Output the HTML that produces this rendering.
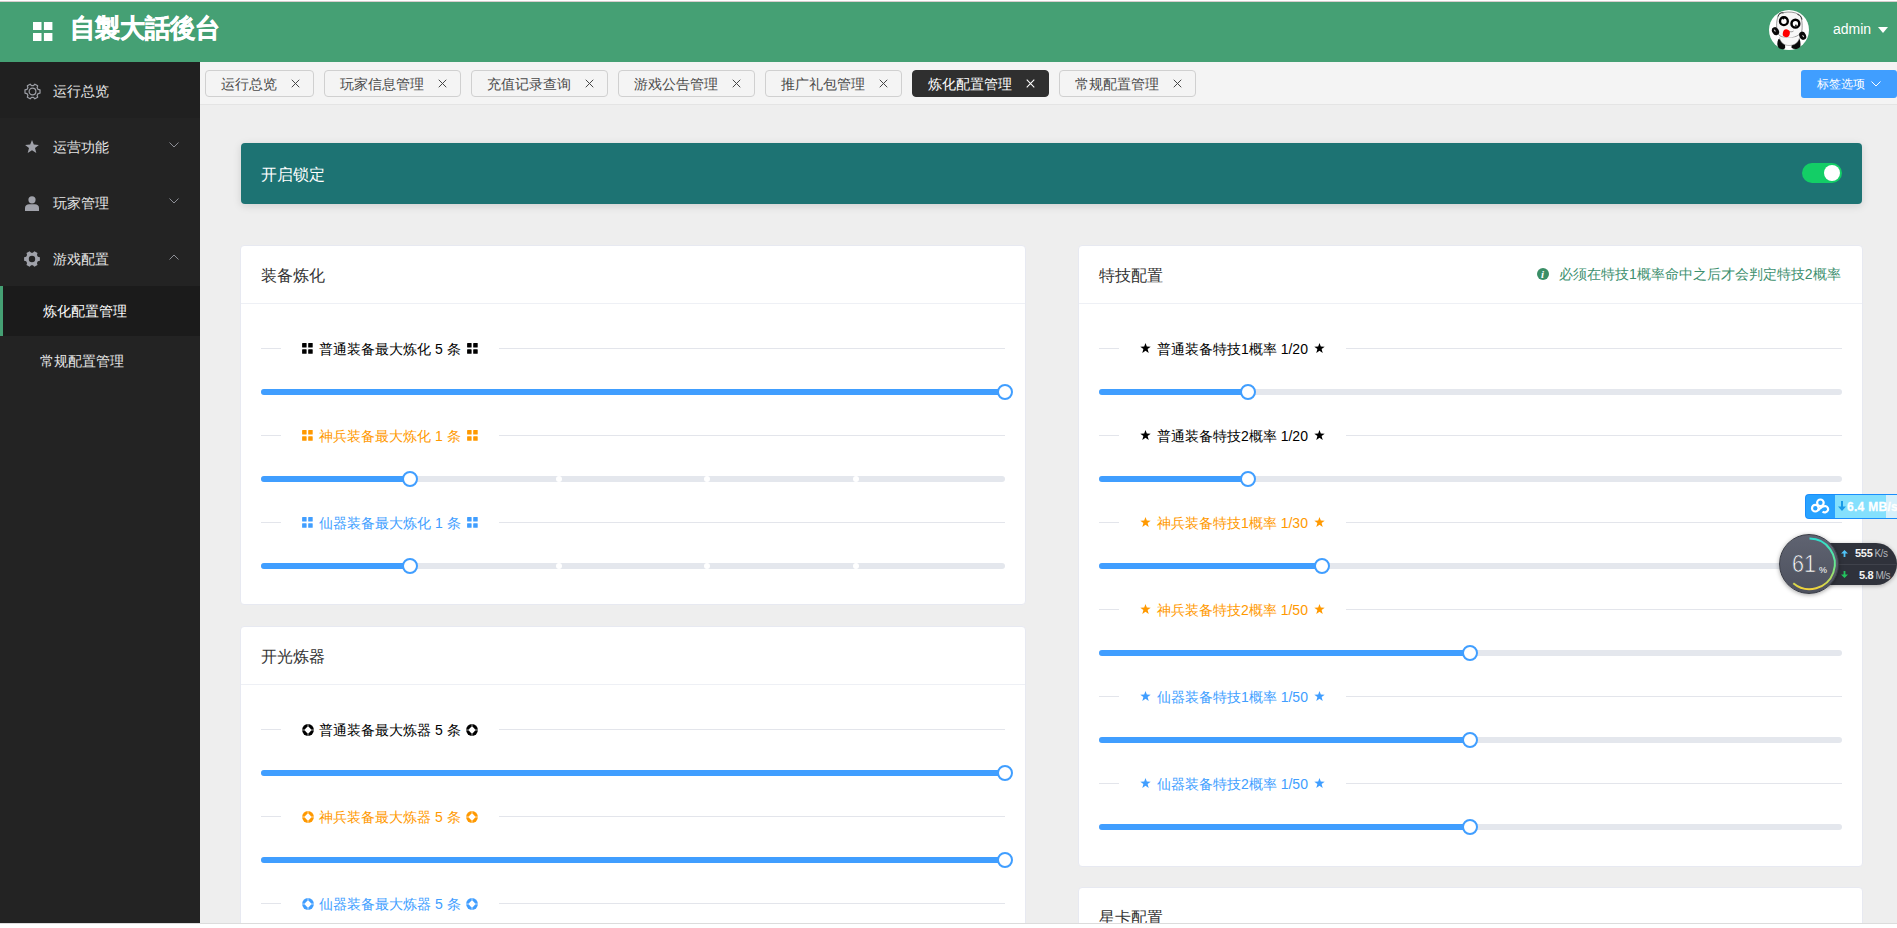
<!DOCTYPE html>
<html><head><meta charset="utf-8">
<style>
*{box-sizing:border-box;margin:0;padding:0}
html,body{width:1897px;height:928px;overflow:hidden;background:#fff;font-family:"Liberation Sans",sans-serif;}
.abs{position:absolute}
#topstrip{left:0;top:0;width:1897px;height:2px;background:#fff;border-bottom:1px solid #d8cdcd}
#header{left:0;top:2px;width:1897px;height:60px;background:#45a074}
#side{left:0;top:62px;width:200px;height:861px;background:#232323}
#tabbar{left:200px;top:62px;width:1697px;height:43px;background:#f4f4f4;border-bottom:1px solid #e4e4e4}
#content{left:200px;top:105px;width:1697px;height:818px;background:#eeeeee;overflow:hidden}
#bottom{left:0;top:923px;width:1897px;height:5px;background:#fff;border-top:1px solid #dcdcdc}
.txt{white-space:nowrap;line-height:1}
.mi{position:absolute;left:0;width:200px;height:56px}
.mi .t{position:absolute;left:53px;top:1px;line-height:56px;font-size:14px;color:#e6e6e6;white-space:nowrap}
.mi svg{position:absolute}
.tab{position:absolute;top:70px;height:27px;border:1px solid #d0d0d0;border-radius:4px;background:#f4f4f4;font-size:14px;color:#4a4a4a;line-height:27px;padding-left:15px;white-space:nowrap}
.tab .x{position:absolute;top:8px;width:9px;height:9px}
.tab.on{background:#2f2f2f;border-color:#2f2f2f;color:#fff}
.card{background:#fff;border-radius:4px;border:1px solid #e7e9f1}
.ch{position:absolute;left:0;top:0;width:100%;height:58px;border-bottom:1px solid #eef0f5;font-size:16px;color:#333;padding-left:20px;line-height:60px;white-space:nowrap}
.leg{height:18px;background:#fff;padding:0 21px;white-space:nowrap;font-size:14px;line-height:18px;display:flex;align-items:center}
.leg .lt{margin:0 6px;position:relative;top:1px}
.trk{height:6px;border-radius:3px;background:#e4e7ed}
.bar{height:6px;border-radius:3px;background:#409eff}
.stp{width:6px;height:6px;border-radius:50%;background:#fff}
.hdl{width:16px;height:16px;border-radius:50%;background:#fff;border:2px solid #409eff}
</style></head><body>
<div id="topstrip" class="abs"></div>
<div id="header" class="abs">
  <svg class="abs" style="left:32px;top:19px" width="22" height="22" viewBox="0 0 22 22"><rect x="1" y="1" width="8.5" height="8" fill="#fff"/><rect x="11.9" y="1" width="8.5" height="8" fill="#fff"/><rect x="1" y="12" width="8.5" height="8" fill="#fff"/><rect x="11.9" y="12" width="8.5" height="8" fill="#fff"/></svg>
  <div class="abs txt" style="left:70px;top:13px;font-size:25px;font-weight:bold;color:#fff;-webkit-text-stroke:.5px #fff;transform:scaleY(1.03);transform-origin:0 0">自製大話後台</div>
  <svg class="abs" style="left:1769px;top:8px" width="40" height="40" viewBox="0 0 40 40">
<circle cx="20" cy="20" r="20" fill="#fff"/>
<path d="M8.5 23C7 17 7.5 9 9.5 5.5 11 3 13 2 15 2.5 20 1.5 26 2 30 4.5 33 7 33.5 14 33 20 32 24 28 27.5 20 28 14 28 10 26 8.5 23z" fill="#f7f7f7" stroke="#555" stroke-width=".6"/>
<path d="M9 6.5C9.5 3.5 12 2.2 14.5 3M28.5 4.5C31 5 32.5 6.5 33 9.5" fill="none" stroke="#333" stroke-width="1"/>
<path d="M9.5 29C8 32 7.5 36 10.5 38.5 13 39.8 16 39.5 16.2 37.5L15.8 30.5zM22.8 30.5L22.5 37.8C25 39.7 29 39.3 31.2 37 31.8 34 31.5 31 30.5 28.8z" fill="#0a0a0a"/>
<path d="M10.5 27.5C11.5 33 15.5 35.5 20 35.5 25 35.5 29.5 33 30.5 27.5" fill="#f8f8f8" stroke="#777" stroke-width=".5"/>
<ellipse cx="6.5" cy="21.2" rx="3.3" ry="4.2" transform="rotate(-30 6.5 21.2)" fill="#0a0a0a"/>
<ellipse cx="33.7" cy="25.8" rx="3.3" ry="4.2" transform="rotate(-25 33.7 25.8)" fill="#0a0a0a"/>
<ellipse cx="5.8" cy="20.6" rx=".6" ry="1.3" transform="rotate(-40 5.8 20.6)" fill="#ccc"/>
<ellipse cx="34.2" cy="26.2" rx=".6" ry="1.3" transform="rotate(-40 34.2 26.2)" fill="#ccc"/>
<circle cx="14.9" cy="11.2" r="3.9" fill="#fff" stroke="#000" stroke-width="2.4"/>
<circle cx="26.4" cy="13.7" r="3.9" fill="#fff" stroke="#000" stroke-width="2.5"/>
<circle cx="14.4" cy="8.6" r=".9" fill="#000"/>
<circle cx="26.9" cy="15.6" r="1" fill="#333"/>
<ellipse cx="17.3" cy="23.3" rx="3.5" ry="3.9" fill="#f00" transform="rotate(15 17.3 23.3)"/>
<path d="M20.5 21.5C22 22 23.5 21.8 24.5 21" fill="none" stroke="#555" stroke-width=".6"/>
</svg>
  <div class="abs txt" style="left:1833px;top:20px;font-size:14px;color:#fff">admin</div>
  <svg class="abs" style="left:1878px;top:25px" width="10" height="6" viewBox="0 0 10 6"><path d="M0 0H10L5 6Z" fill="#fff"/></svg>
</div>
<div id="side" class="abs">
  <div class="mi" style="top:0;background:#202020">
    <svg style="left:24px;top:21px" width="17" height="17" viewBox="-.3 -.3 16.6 16.6"><path d="M13.41 5.92 L15.34 6.44 L15.34 9.56 L13.41 10.08 L12.51 11.65 L13.02 13.57 L10.32 15.13 L8.91 13.73 L7.09 13.73 L5.68 15.13 L2.98 13.57 L3.49 11.65 L2.59 10.08 L0.66 9.56 L0.66 6.44 L2.59 5.92 L3.49 4.35 L2.98 2.43 L5.68 0.87 L7.09 2.27 L8.91 2.27 L10.32 0.87 L13.02 2.43 L12.51 4.35Z" fill="none" stroke="#9c9ea5" stroke-width="1.2" stroke-linejoin="round"/><circle cx="8" cy="8" r="3.3" fill="none" stroke="#9c9ea5" stroke-width="1.2"/></svg>
    <div class="t">运行总览</div>
  </div>
  <div class="mi" style="top:56px">
    <svg style="left:25px;top:22px" width="14" height="13" viewBox="0 0 14 13"><path d="M7 0l1.8 4.6 5.1.3-3.9 3.2 1.3 4.9L7 10.3 2.7 13l1.3-4.9L.1 4.9l5.1-.3z" fill="#a0a2aa"/></svg>
    <div class="t">运营功能</div>
    <svg style="left:169px;top:24px" width="10" height="6" viewBox="0 0 10 6"><path d="M.5 .5L5 5 9.5 .5" fill="none" stroke="#8d8f96" stroke-width="1"/></svg>
  </div>
  <div class="mi" style="top:112px">
    <svg style="left:25px;top:22px" width="14" height="15" viewBox="0 0 14 15"><circle cx="7" cy="3.8" r="3.6" fill="#a0a2aa"/><path d="M0 15v-3.2C0 9.6 2 8.3 4 8.3h6c2 0 4 1.3 4 3.5V15z" fill="#a0a2aa"/></svg>
    <div class="t">玩家管理</div>
    <svg style="left:169px;top:24px" width="10" height="6" viewBox="0 0 10 6"><path d="M.5 .5L5 5 9.5 .5" fill="none" stroke="#8d8f96" stroke-width="1"/></svg>
  </div>
  <div class="mi" style="top:168px">
    <svg style="left:24px;top:21px" width="16" height="16" viewBox="0 0 16 16"><path fill-rule="evenodd" d="M13.84 5.64 L15.89 6.18 L15.89 9.82 L13.84 10.36 L12.96 11.88 L13.52 13.92 L10.37 15.75 L8.88 14.24 L7.12 14.24 L5.63 15.75 L2.48 13.92 L3.04 11.88 L2.16 10.36 L0.11 9.82 L0.11 6.18 L2.16 5.64 L3.04 4.12 L2.48 2.08 L5.63 0.25 L7.12 1.76 L8.88 1.76 L10.37 0.25 L13.52 2.08 L12.96 4.12Z M11.2 8A3.2 3.2 0 1 0 4.8 8A3.2 3.2 0 1 0 11.2 8Z" fill="#a0a2aa"/></svg>
    <div class="t">游戏配置</div>
    <svg style="left:169px;top:24px" width="10" height="6" viewBox="0 0 10 6"><path d="M.5 5.5L5 1 9.5 5.5" fill="none" stroke="#8d8f96" stroke-width="1"/></svg>
  </div>
  <div class="mi" style="top:224px;height:50px;background:#1b1b1b">
    <div class="abs" style="left:0;top:0;width:3px;height:50px;background:#45a074"></div>
    <div class="t" style="left:43px;top:0;line-height:50px;color:#fff">炼化配置管理</div>
  </div>
  <div class="mi" style="top:274px;height:50px">
    <div class="t" style="left:40px;top:0;line-height:50px">常规配置管理</div>
  </div>
</div>
<div id="tabbar" class="abs">
  <div class="tab" style="left:5px;top:8px;width:109px">运行总览<svg class="x" style="left:85px" width="10" height="10" viewBox="0 0 10 10"><path d="M.8 .8L9.2 9.2M9.2 .8L.8 9.2" stroke="#444" stroke-width="1.1"/></svg></div>
  <div class="tab" style="left:124px;top:8px;width:137px">玩家信息管理<svg class="x" style="left:113px" width="10" height="10" viewBox="0 0 10 10"><path d="M.8 .8L9.2 9.2M9.2 .8L.8 9.2" stroke="#444" stroke-width="1.1"/></svg></div>
  <div class="tab" style="left:271px;top:8px;width:137px">充值记录查询<svg class="x" style="left:113px" width="10" height="10" viewBox="0 0 10 10"><path d="M.8 .8L9.2 9.2M9.2 .8L.8 9.2" stroke="#444" stroke-width="1.1"/></svg></div>
  <div class="tab" style="left:418px;top:8px;width:137px">游戏公告管理<svg class="x" style="left:113px" width="10" height="10" viewBox="0 0 10 10"><path d="M.8 .8L9.2 9.2M9.2 .8L.8 9.2" stroke="#444" stroke-width="1.1"/></svg></div>
  <div class="tab" style="left:565px;top:8px;width:137px">推广礼包管理<svg class="x" style="left:113px" width="10" height="10" viewBox="0 0 10 10"><path d="M.8 .8L9.2 9.2M9.2 .8L.8 9.2" stroke="#444" stroke-width="1.1"/></svg></div>
  <div class="tab on" style="left:712px;top:8px;width:137px">炼化配置管理<svg class="x" style="left:113px" width="10" height="10" viewBox="0 0 10 10"><path d="M.8 .8L9.2 9.2M9.2 .8L.8 9.2" stroke="#fff" stroke-width="1.2"/></svg></div>
  <div class="tab" style="left:859px;top:8px;width:137px">常规配置管理<svg class="x" style="left:113px" width="10" height="10" viewBox="0 0 10 10"><path d="M.8 .8L9.2 9.2M9.2 .8L.8 9.2" stroke="#444" stroke-width="1.1"/></svg></div>
  <div class="abs" style="left:1601px;top:8px;width:96px;height:28px;background:#409eff;border-radius:3px"><div class="abs txt" style="left:16px;top:8px;font-size:12px;color:#fff">标签选项</div><svg class="abs" style="left:70px;top:11px" width="10" height="6" viewBox="0 0 10 6"><path d="M.5 .5L5 5 9.5 .5" fill="none" stroke="#fff" stroke-width="1"/></svg></div>
</div>
<div id="content" class="abs"></div>
<!--CONTENT-->
<div class="abs" style="left:241px;top:143px;width:1621px;height:61px;background:#1d7373;border-radius:4px;box-shadow:0 2px 8px rgba(0,0,0,.13)"><div class="abs txt" style="left:20px;top:24px;font-size:16px;color:#fff">开启锁定</div><div class="abs" style="left:1561px;top:20px;width:40px;height:20px;border-radius:10px;background:#13ce66"><div class="abs" style="left:22px;top:2px;width:16px;height:16px;border-radius:50%;background:#fff"></div></div></div>
<div class="abs card" style="left:240px;top:245px;width:786px;height:360px"><div class="ch">装备炼化</div></div>
<div class="abs card" style="left:240px;top:626px;width:786px;height:402px"><div class="ch">开光炼器</div></div>
<div class="abs card" style="left:1078px;top:245px;width:785px;height:622px"><div class="ch">特技配置</div></div>
<div class="abs card" style="left:1078px;top:887px;width:785px;height:202px"><div class="ch">星卡配置</div></div>
<div class="abs txt" style="left:1537px;top:268px;width:12px;height:12px;border-radius:50%;background:#3a8e66"></div><div class="abs txt" style="left:1541px;top:268.5px;font-size:11px;font-style:italic;font-weight:bold;color:#fff;font-family:'Liberation Serif',serif">i</div>
<div class="abs txt" style="left:1559px;top:267px;font-size:14px;color:#3d8f6e">必须在特技1概率命中之后才会判定特技2概率</div>
<div class="abs" style="left:261px;top:348px;width:744px;height:1px;background:#e3e5eb"></div>
<div class="abs leg" style="left:281px;top:339px;color:#000"><svg width="11" height="11" viewBox="0 0 11 11" style="vertical-align:0"><rect x="0.1" y="0" width="4.5" height="4.6" rx=".6" fill="#000"/><rect x="6.2" y="0" width="4.5" height="4.6" rx=".6" fill="#000"/><rect x="0.1" y="6.2" width="4.5" height="4.6" rx=".6" fill="#000"/><rect x="6.2" y="6.2" width="4.5" height="4.6" rx=".6" fill="#000"/></svg><span class="lt">普通装备最大炼化 5 条</span><svg width="11" height="11" viewBox="0 0 11 11" style="vertical-align:0"><rect x="0.1" y="0" width="4.5" height="4.6" rx=".6" fill="#000"/><rect x="6.2" y="0" width="4.5" height="4.6" rx=".6" fill="#000"/><rect x="0.1" y="6.2" width="4.5" height="4.6" rx=".6" fill="#000"/><rect x="6.2" y="6.2" width="4.5" height="4.6" rx=".6" fill="#000"/></svg></div>
<div class="abs trk" style="left:261px;top:389px;width:744px"></div>
<div class="abs bar" style="left:261px;top:389px;width:744.0px"></div>
<div class="abs hdl" style="left:997.0px;top:384px"></div>
<div class="abs" style="left:261px;top:435px;width:744px;height:1px;background:#e3e5eb"></div>
<div class="abs leg" style="left:281px;top:426px;color:#ff9900"><svg width="11" height="11" viewBox="0 0 11 11" style="vertical-align:0"><rect x="0.1" y="0" width="4.5" height="4.6" rx=".6" fill="#ff9900"/><rect x="6.2" y="0" width="4.5" height="4.6" rx=".6" fill="#ff9900"/><rect x="0.1" y="6.2" width="4.5" height="4.6" rx=".6" fill="#ff9900"/><rect x="6.2" y="6.2" width="4.5" height="4.6" rx=".6" fill="#ff9900"/></svg><span class="lt">神兵装备最大炼化 1 条</span><svg width="11" height="11" viewBox="0 0 11 11" style="vertical-align:0"><rect x="0.1" y="0" width="4.5" height="4.6" rx=".6" fill="#ff9900"/><rect x="6.2" y="0" width="4.5" height="4.6" rx=".6" fill="#ff9900"/><rect x="0.1" y="6.2" width="4.5" height="4.6" rx=".6" fill="#ff9900"/><rect x="6.2" y="6.2" width="4.5" height="4.6" rx=".6" fill="#ff9900"/></svg></div>
<div class="abs trk" style="left:261px;top:476px;width:744px"></div>
<div class="abs bar" style="left:261px;top:476px;width:148.8px"></div>
<div class="abs stp" style="left:555.6px;top:476px"></div>
<div class="abs stp" style="left:704.4px;top:476px"></div>
<div class="abs stp" style="left:853.2px;top:476px"></div>
<div class="abs hdl" style="left:401.8px;top:471px"></div>
<div class="abs" style="left:261px;top:522px;width:744px;height:1px;background:#e3e5eb"></div>
<div class="abs leg" style="left:281px;top:513px;color:#409eff"><svg width="11" height="11" viewBox="0 0 11 11" style="vertical-align:0"><rect x="0.1" y="0" width="4.5" height="4.6" rx=".6" fill="#409eff"/><rect x="6.2" y="0" width="4.5" height="4.6" rx=".6" fill="#409eff"/><rect x="0.1" y="6.2" width="4.5" height="4.6" rx=".6" fill="#409eff"/><rect x="6.2" y="6.2" width="4.5" height="4.6" rx=".6" fill="#409eff"/></svg><span class="lt">仙器装备最大炼化 1 条</span><svg width="11" height="11" viewBox="0 0 11 11" style="vertical-align:0"><rect x="0.1" y="0" width="4.5" height="4.6" rx=".6" fill="#409eff"/><rect x="6.2" y="0" width="4.5" height="4.6" rx=".6" fill="#409eff"/><rect x="0.1" y="6.2" width="4.5" height="4.6" rx=".6" fill="#409eff"/><rect x="6.2" y="6.2" width="4.5" height="4.6" rx=".6" fill="#409eff"/></svg></div>
<div class="abs trk" style="left:261px;top:563px;width:744px"></div>
<div class="abs bar" style="left:261px;top:563px;width:148.8px"></div>
<div class="abs stp" style="left:555.6px;top:563px"></div>
<div class="abs stp" style="left:704.4px;top:563px"></div>
<div class="abs stp" style="left:853.2px;top:563px"></div>
<div class="abs hdl" style="left:401.8px;top:558px"></div>
<div class="abs" style="left:261px;top:729px;width:744px;height:1px;background:#e3e5eb"></div>
<div class="abs leg" style="left:281px;top:720px;color:#000"><svg width="12" height="12" viewBox="0 0 12 12" style="vertical-align:0;margin:0 -.5px;position:relative;top:1px"><circle cx="6" cy="6" r="5.9" fill="#000"/><path d="M6 2.5C7.6 3.6 8.4 4.4 9.5 6 8.4 7.6 7.6 8.4 6 9.5 4.4 8.4 3.6 7.6 2.5 6 3.6 4.4 4.4 3.6 6 2.5z" fill="#fff"/><path d="M6 0V12M0 6H12" stroke="#fff" stroke-width=".6"/></svg><span class="lt">普通装备最大炼器 5 条</span><svg width="12" height="12" viewBox="0 0 12 12" style="vertical-align:0;margin:0 -.5px;position:relative;top:1px"><circle cx="6" cy="6" r="5.9" fill="#000"/><path d="M6 2.5C7.6 3.6 8.4 4.4 9.5 6 8.4 7.6 7.6 8.4 6 9.5 4.4 8.4 3.6 7.6 2.5 6 3.6 4.4 4.4 3.6 6 2.5z" fill="#fff"/><path d="M6 0V12M0 6H12" stroke="#fff" stroke-width=".6"/></svg></div>
<div class="abs trk" style="left:261px;top:770px;width:744px"></div>
<div class="abs bar" style="left:261px;top:770px;width:744.0px"></div>
<div class="abs hdl" style="left:997.0px;top:765px"></div>
<div class="abs" style="left:261px;top:816px;width:744px;height:1px;background:#e3e5eb"></div>
<div class="abs leg" style="left:281px;top:807px;color:#ff9900"><svg width="12" height="12" viewBox="0 0 12 12" style="vertical-align:0;margin:0 -.5px;position:relative;top:1px"><circle cx="6" cy="6" r="5.9" fill="#ff9900"/><path d="M6 2.5C7.6 3.6 8.4 4.4 9.5 6 8.4 7.6 7.6 8.4 6 9.5 4.4 8.4 3.6 7.6 2.5 6 3.6 4.4 4.4 3.6 6 2.5z" fill="#fff"/><path d="M6 0V12M0 6H12" stroke="#fff" stroke-width=".6"/></svg><span class="lt">神兵装备最大炼器 5 条</span><svg width="12" height="12" viewBox="0 0 12 12" style="vertical-align:0;margin:0 -.5px;position:relative;top:1px"><circle cx="6" cy="6" r="5.9" fill="#ff9900"/><path d="M6 2.5C7.6 3.6 8.4 4.4 9.5 6 8.4 7.6 7.6 8.4 6 9.5 4.4 8.4 3.6 7.6 2.5 6 3.6 4.4 4.4 3.6 6 2.5z" fill="#fff"/><path d="M6 0V12M0 6H12" stroke="#fff" stroke-width=".6"/></svg></div>
<div class="abs trk" style="left:261px;top:857px;width:744px"></div>
<div class="abs bar" style="left:261px;top:857px;width:744.0px"></div>
<div class="abs hdl" style="left:997.0px;top:852px"></div>
<div class="abs" style="left:261px;top:903px;width:744px;height:1px;background:#e3e5eb"></div>
<div class="abs leg" style="left:281px;top:894px;color:#409eff"><svg width="12" height="12" viewBox="0 0 12 12" style="vertical-align:0;margin:0 -.5px;position:relative;top:1px"><circle cx="6" cy="6" r="5.9" fill="#409eff"/><path d="M6 2.5C7.6 3.6 8.4 4.4 9.5 6 8.4 7.6 7.6 8.4 6 9.5 4.4 8.4 3.6 7.6 2.5 6 3.6 4.4 4.4 3.6 6 2.5z" fill="#fff"/><path d="M6 0V12M0 6H12" stroke="#fff" stroke-width=".6"/></svg><span class="lt">仙器装备最大炼器 5 条</span><svg width="12" height="12" viewBox="0 0 12 12" style="vertical-align:0;margin:0 -.5px;position:relative;top:1px"><circle cx="6" cy="6" r="5.9" fill="#409eff"/><path d="M6 2.5C7.6 3.6 8.4 4.4 9.5 6 8.4 7.6 7.6 8.4 6 9.5 4.4 8.4 3.6 7.6 2.5 6 3.6 4.4 4.4 3.6 6 2.5z" fill="#fff"/><path d="M6 0V12M0 6H12" stroke="#fff" stroke-width=".6"/></svg></div>
<div class="abs trk" style="left:261px;top:944px;width:744px"></div>
<div class="abs bar" style="left:261px;top:944px;width:744.0px"></div>
<div class="abs hdl" style="left:997.0px;top:939px"></div>
<div class="abs" style="left:1099px;top:348px;width:743px;height:1px;background:#e3e5eb"></div>
<div class="abs leg" style="left:1119px;top:339px;color:#000"><svg width="11" height="10" viewBox="0 0 11 10" style="vertical-align:0"><path d="M5.5 0l1.3 3.6 3.9.1-3.1 2.4 1.1 3.8-3.2-2.2-3.2 2.2 1.1-3.8L.3 3.7l3.9-.1z" fill="#000"/></svg><span class="lt">普通装备特技1概率 1/20</span><svg width="11" height="10" viewBox="0 0 11 10" style="vertical-align:0"><path d="M5.5 0l1.3 3.6 3.9.1-3.1 2.4 1.1 3.8-3.2-2.2-3.2 2.2 1.1-3.8L.3 3.7l3.9-.1z" fill="#000"/></svg></div>
<div class="abs trk" style="left:1099px;top:389px;width:743px"></div>
<div class="abs bar" style="left:1099px;top:389px;width:148.6px"></div>
<div class="abs hdl" style="left:1239.6px;top:384px"></div>
<div class="abs" style="left:1099px;top:435px;width:743px;height:1px;background:#e3e5eb"></div>
<div class="abs leg" style="left:1119px;top:426px;color:#000"><svg width="11" height="10" viewBox="0 0 11 10" style="vertical-align:0"><path d="M5.5 0l1.3 3.6 3.9.1-3.1 2.4 1.1 3.8-3.2-2.2-3.2 2.2 1.1-3.8L.3 3.7l3.9-.1z" fill="#000"/></svg><span class="lt">普通装备特技2概率 1/20</span><svg width="11" height="10" viewBox="0 0 11 10" style="vertical-align:0"><path d="M5.5 0l1.3 3.6 3.9.1-3.1 2.4 1.1 3.8-3.2-2.2-3.2 2.2 1.1-3.8L.3 3.7l3.9-.1z" fill="#000"/></svg></div>
<div class="abs trk" style="left:1099px;top:476px;width:743px"></div>
<div class="abs bar" style="left:1099px;top:476px;width:148.6px"></div>
<div class="abs hdl" style="left:1239.6px;top:471px"></div>
<div class="abs" style="left:1099px;top:522px;width:743px;height:1px;background:#e3e5eb"></div>
<div class="abs leg" style="left:1119px;top:513px;color:#ff9900"><svg width="11" height="10" viewBox="0 0 11 10" style="vertical-align:0"><path d="M5.5 0l1.3 3.6 3.9.1-3.1 2.4 1.1 3.8-3.2-2.2-3.2 2.2 1.1-3.8L.3 3.7l3.9-.1z" fill="#ff9900"/></svg><span class="lt">神兵装备特技1概率 1/30</span><svg width="11" height="10" viewBox="0 0 11 10" style="vertical-align:0"><path d="M5.5 0l1.3 3.6 3.9.1-3.1 2.4 1.1 3.8-3.2-2.2-3.2 2.2 1.1-3.8L.3 3.7l3.9-.1z" fill="#ff9900"/></svg></div>
<div class="abs trk" style="left:1099px;top:563px;width:743px"></div>
<div class="abs bar" style="left:1099px;top:563px;width:222.9px"></div>
<div class="abs hdl" style="left:1313.9px;top:558px"></div>
<div class="abs" style="left:1099px;top:609px;width:743px;height:1px;background:#e3e5eb"></div>
<div class="abs leg" style="left:1119px;top:600px;color:#ff9900"><svg width="11" height="10" viewBox="0 0 11 10" style="vertical-align:0"><path d="M5.5 0l1.3 3.6 3.9.1-3.1 2.4 1.1 3.8-3.2-2.2-3.2 2.2 1.1-3.8L.3 3.7l3.9-.1z" fill="#ff9900"/></svg><span class="lt">神兵装备特技2概率 1/50</span><svg width="11" height="10" viewBox="0 0 11 10" style="vertical-align:0"><path d="M5.5 0l1.3 3.6 3.9.1-3.1 2.4 1.1 3.8-3.2-2.2-3.2 2.2 1.1-3.8L.3 3.7l3.9-.1z" fill="#ff9900"/></svg></div>
<div class="abs trk" style="left:1099px;top:650px;width:743px"></div>
<div class="abs bar" style="left:1099px;top:650px;width:371.0px"></div>
<div class="abs hdl" style="left:1462.0px;top:645px"></div>
<div class="abs" style="left:1099px;top:696px;width:743px;height:1px;background:#e3e5eb"></div>
<div class="abs leg" style="left:1119px;top:687px;color:#409eff"><svg width="11" height="10" viewBox="0 0 11 10" style="vertical-align:0"><path d="M5.5 0l1.3 3.6 3.9.1-3.1 2.4 1.1 3.8-3.2-2.2-3.2 2.2 1.1-3.8L.3 3.7l3.9-.1z" fill="#409eff"/></svg><span class="lt">仙器装备特技1概率 1/50</span><svg width="11" height="10" viewBox="0 0 11 10" style="vertical-align:0"><path d="M5.5 0l1.3 3.6 3.9.1-3.1 2.4 1.1 3.8-3.2-2.2-3.2 2.2 1.1-3.8L.3 3.7l3.9-.1z" fill="#409eff"/></svg></div>
<div class="abs trk" style="left:1099px;top:737px;width:743px"></div>
<div class="abs bar" style="left:1099px;top:737px;width:371.0px"></div>
<div class="abs hdl" style="left:1462.0px;top:732px"></div>
<div class="abs" style="left:1099px;top:783px;width:743px;height:1px;background:#e3e5eb"></div>
<div class="abs leg" style="left:1119px;top:774px;color:#409eff"><svg width="11" height="10" viewBox="0 0 11 10" style="vertical-align:0"><path d="M5.5 0l1.3 3.6 3.9.1-3.1 2.4 1.1 3.8-3.2-2.2-3.2 2.2 1.1-3.8L.3 3.7l3.9-.1z" fill="#409eff"/></svg><span class="lt">仙器装备特技2概率 1/50</span><svg width="11" height="10" viewBox="0 0 11 10" style="vertical-align:0"><path d="M5.5 0l1.3 3.6 3.9.1-3.1 2.4 1.1 3.8-3.2-2.2-3.2 2.2 1.1-3.8L.3 3.7l3.9-.1z" fill="#409eff"/></svg></div>
<div class="abs trk" style="left:1099px;top:824px;width:743px"></div>
<div class="abs bar" style="left:1099px;top:824px;width:371.0px"></div>
<div class="abs hdl" style="left:1462.0px;top:819px"></div>
<!--/CONTENT-->
<!--WIDGETS-->
<div class="abs" style="left:1805px;top:494px;width:100px;height:25px;border-radius:4px;background:#1a8efc;overflow:hidden"><div class="abs" style="left:1px;top:1px;width:30px;height:23px;border-radius:3px 0 0 3px;background:#28a2ff"></div>
  <div class="abs" style="left:30px;top:1px;width:51px;height:23px;background:#84e0fd"></div>
  <div class="abs" style="left:81px;top:1px;width:30px;height:23px;background:#d6f0fb"></div>
  <svg class="abs" style="left:5px;top:3px" width="20" height="19" viewBox="0 0 20 19"><g fill="none" stroke="#fff" stroke-width="2.2"><circle cx="10.4" cy="5.8" r="3.3"/><circle cx="5.3" cy="11.2" r="3.3"/><path d="M8 13.5C10 11.2 12 9 15.3 9 A3.2 3.2 0 1 1 12.6 14.4"/></g></svg>
  <svg class="abs" style="left:33px;top:7px" width="8" height="10" viewBox="0 0 8 10"><path d="M3 0H5V5.5H8L4 10 0 5.5H3z" fill="#1a9be8"/></svg>
  <div class="abs txt" style="left:42px;top:7px;font-size:12px;font-weight:bold;color:#fff;letter-spacing:.3px;-webkit-text-stroke:.3px #fff">6.4 MB/s</div>
</div>
<div class="abs" style="left:1826px;top:543px;width:71px;height:42px;border-radius:0 21px 21px 0;background:#2f323b;box-shadow:0 1px 4px rgba(0,0,0,.3)">
  <div class="abs" style="left:0;top:21px;width:71px;height:1px;background:#3f424b"></div>
  <svg class="abs" style="left:15px;top:7px" width="7" height="7" viewBox="0 0 7 7"><path d="M3.5 0L7 3.4H4.4V7H2.6V3.4H0z" fill="#4fc3f7"/></svg>
  <svg class="abs" style="left:15px;top:28px" width="7" height="7" viewBox="0 0 7 7"><path d="M3.5 7L7 3.6H4.4V0H2.6V3.6H0z" fill="#22c55e"/></svg>
  <div class="abs txt" style="left:29px;top:5px;font-size:11px;font-weight:bold;color:#f4f4f4;letter-spacing:-.3px">555<span style="font-size:10px;font-weight:normal;color:#b4b6bc;margin-left:2px;letter-spacing:-.5px">K/s</span></div>
  <div class="abs txt" style="left:33px;top:27px;font-size:11px;font-weight:bold;color:#f4f4f4;letter-spacing:-.3px">5.8<span style="font-size:10px;font-weight:normal;color:#b4b6bc;margin-left:2px;letter-spacing:-.5px">M/s</span></div>
</div>
<div class="abs" style="left:1779px;top:534px;width:60px;height:60px;border-radius:50%;background:linear-gradient(#5f6371,#4d515e);border:1px solid #3a3d46;box-shadow:0 1px 4px rgba(0,0,0,.35)">
  <svg class="abs" style="left:-1px;top:-1px" width="60" height="60" viewBox="0 0 60 60">
    <defs><linearGradient id="ag" x1="0" y1="0" x2="0" y2="1"><stop offset="0" stop-color="#2ee0d0"/><stop offset=".55" stop-color="#6ee88a"/><stop offset="1" stop-color="#f2d23a"/></linearGradient></defs>
    <path d="M30.5 4.6A25.3 25.3 0 1 1 14.3 49.3" fill="none" stroke="url(#ag)" stroke-width="2"/>
  </svg>
  <div class="abs txt" style="left:11.5px;top:17px;font-size:24px;font-weight:normal;color:#fff;letter-spacing:0;transform:scaleX(.9);transform-origin:0 0;-webkit-text-stroke:.7px #575b68">61</div>
  <div class="abs txt" style="left:39px;top:31px;font-size:9px;color:#fff">%</div>
</div>
<!--/WIDGETS-->
<div id="bottom" class="abs"></div>
</body></html>
